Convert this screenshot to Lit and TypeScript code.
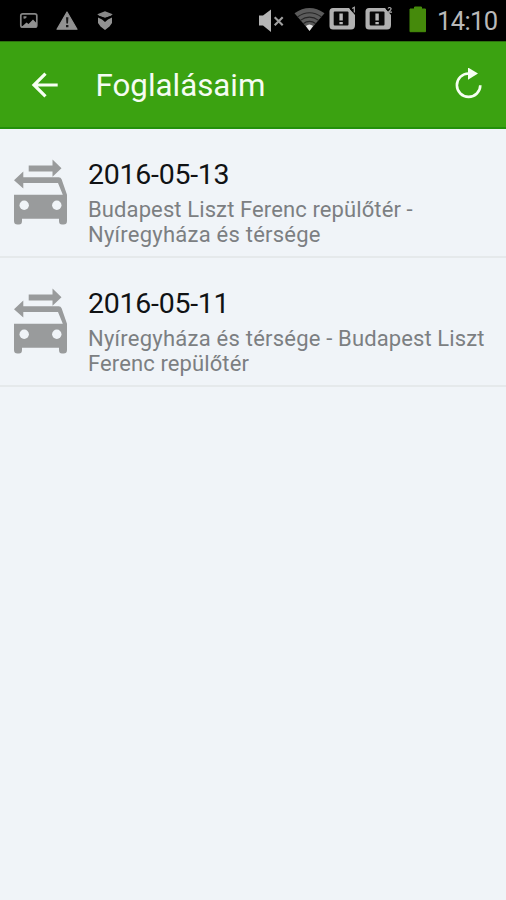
import { LitElement, html, css, svg } from "lit";
import { customElement, property } from "lit/decorators.js";

interface Segment {
  text: string;
  kind: "airport" | "region";
}

interface Booking {
  date: string;
  lines: Segment[][];
}

const bookings: Booking[] = [
  {
    date: "2016-05-13",
    lines: [
      [{ text: "Budapest Liszt Ferenc repülőtér -", kind: "airport" }],
      [{ text: "Nyíregyháza és térsége", kind: "region" }],
    ],
  },
  {
    date: "2016-05-11",
    lines: [
      [
        { text: "Nyíregyháza és térsége", kind: "region" },
        { text: " - Budapest Liszt", kind: "airport" },
      ],
      [{ text: "Ferenc repülőtér", kind: "airport" }],
    ],
  },
];

@customElement("status-bar")
class StatusBar extends LitElement {
  static styles = css`
    :host {
      display: flex;
      justify-content: space-between;
      height: 41px;
      box-sizing: border-box;
      padding: 0 9px 0 19px;
      background: #000;
      font-family: Roboto, "Noto Sans", sans-serif;
      color: #b9b9b9;
    }
    svg { display: block; }
    .left, .right { display: flex; align-items: flex-start; }
    .left { gap: 18px; padding-top: 10px; }
    .right { padding-top: 6px; }
    .mute { margin-right: 9px; }
    .wifi { margin-right: 4px; }
    .sim { margin-right: 8px; overflow: visible; }
    .battery { margin: 0 10px 0 8px; }
    .clock { width: 60px; font-size: 25.5px; line-height: 30px; white-space: nowrap; letter-spacing: -0.6px; }
  `;

  private sim(n: number) {
    const digit = n === 1
      ? svg`<path d="M23.2 2.6 25.3 1.3V6.5" fill="none" stroke="#aaa" stroke-width="1.2"/>`
      : svg`<path d="M23 2.5Q24.5.6 26 2.3 26.6 3.5 23.3 6.2H27" fill="none" stroke="#aaa" stroke-width="1.2"/>`;
    return html`<svg class="sim" width="28" height="26" viewBox="0 0 28 26">
      <path d="M4 2H20L26 9V19Q26 23.5 22 23.5H4Q.5 23.5.5 20V5.5Q.5 2 4 2Z" fill="#b0b0b0"/>
      <rect x="4.7" y="5.5" width="14.8" height="14" rx="1" fill="#080808"/>
      <path d="M21.2 0H28V7.2H25L21.2 3.5Z" fill="#000"/>
      <path d="M10.4 7.5H13.8V14.5H10.4ZM10.4 16H13.8V18.3H10.4Z" fill="#b8b8b8"/>${digit}
    </svg>`;
  }

  render() {
    return html`
      <div class="left">
        <svg width="19" height="21" viewBox="0 0 19 21">
          <rect x="1.8" y="3.8" width="16" height="13.4" rx="2" fill="none" stroke="#858585" stroke-width="1.7"/>
          <path d="M3 16.5 7.5 12.5 9.5 14 14 9.5 17.5 13V17H3Z" fill="#929292"/>
          <path d="M4.5 8.5V6.2H7.5V7.5Q6.8 9 4.5 8.5Z" fill="#858585"/>
        </svg>
        <svg width="22" height="21" viewBox="0 0 22 21">
          <path d="M11 2 21 19.2H1Z" fill="#929292" stroke="#929292" stroke-width="1.2" stroke-linejoin="round"/>
          <path d="M10 7.2H12.4L12 13.5H10.4ZM10 15H12.4V17.2H10Z" fill="#181818"/>
        </svg>
        <svg width="18" height="21" viewBox="0 0 18 21">
          <path d="M9 1.3 16.7 4.2 14.5 6 9 7.8 3.5 6 1.3 4.2Z" fill="#888"/>
          <path d="M2 7.5 6 9.5 9 12 12 9.5 16 7.5V13L13.5 16.5 9 20 4.5 16.5 2 13Z" fill="#929292"/>
          <path d="M4 6.8 9 9 14 6.8" fill="none" stroke="#000" stroke-width="1.3"/>
        </svg>
      </div>
      <div class="right">
        <svg class="mute" width="26" height="28" viewBox="0 0 26 28">
          <path d="M0 9.5H4L12 3.5V26L4 19.5H0Z" fill="#b5b5b5"/>
          <path d="M15.7 11.2 23.7 19.2M23.7 11.2 15.7 19.2" stroke="#a0a0a0" stroke-width="2.1"/>
        </svg>
        <svg class="wifi" width="31" height="26" viewBox="0 0 31 26">
          <path d="M.5 7.2Q15.5-3.4 30.5 7.2L15.5 24.8Z" fill="#5b5b5b"/>
          <path d="M3.4 11Q15.5 2.5 27.6 11M6.3 14.4Q15.5 7.8 24.7 14.4M9.1 17.7Q15.5 13 21.9 17.7" fill="none" stroke="#262626" stroke-width="1.1"/>
          <path d="M11.9 20Q15.5 17 19.1 20L15.5 25Z" fill="#e4e4e4"/>
        </svg>
        ${this.sim(1)}${this.sim(2)}
        <svg class="battery" width="18" height="27" viewBox="0 0 18 27">
          <path d="M5.5 1H12.5V3H16.5V25.7H1V3H5.5Z" fill="#458a0b" stroke="#458a0b" stroke-linejoin="round"/>
        </svg>
        <span class="clock">14:10</span>
      </div>`;
  }
}

@customElement("app-header")
class AppHeader extends LitElement {
  static styles = css`
    :host {
      display: flex;
      align-items: center;
      height: 88px;
      box-sizing: border-box;
      padding: 0 23px 0 31px;
      background: #3ba211;
      border-top: 1px solid #2d720f;
      border-bottom: 2px solid #22900a;
      font-family: Roboto, "Noto Sans", sans-serif;
    }
    svg { display: block; }
    .title { margin-left: 36.5px; padding-top: 2px; flex: 1; color: #f5fcf2; font-size: 31.3px; line-height: 40px; font-weight: 400; }
  `;
  render() {
    return html`
      <svg width="28" height="28" viewBox="0 0 28 28">
        <path d="M26.7 14H3M14.5 2.7 3 14 14.5 25.3" fill="none" stroke="#f6fff2" stroke-width="3.2"/>
      </svg>
      <span class="title">Foglalásaim</span>
      <svg width="28" height="34" viewBox="0 0 28 34">
        <path d="M25.3 17.2A11.7 11.7 0 1 1 13.6 5.5H16" fill="none" stroke="#f6fff2" stroke-width="2.6"/>
        <path d="M13 -.5 23 5.6 13 11.8Z" fill="#f6fff2"/>
      </svg>`;
  }
}

@customElement("booking-row")
class BookingRow extends LitElement {
  @property({ attribute: false }) booking!: Booking;
  static styles = css`
    :host {
      display: flex;
      height: 129px;
      box-sizing: border-box;
      border-bottom: 2px solid #e5e9eb;
      font-family: Roboto, "Noto Sans", sans-serif;
    }
    .car { display: block; flex: none; margin: 30px 20px 0 13px; }
    .text { padding-top: 25.5px; }
    .date { font-size: 28.5px; line-height: 40px; letter-spacing: -0.25px; color: #101214; }
    .route { margin-top: 2px; font-size: 22px; line-height: 25.2px; color: #7c7f82; }
    .line { white-space: pre; }
    .airport { letter-spacing: 0.11px; }
    .region { letter-spacing: 0.24px; }
  `;
  render() {
    return html`
      <svg class="car" width="55" height="68" viewBox="0 0 55 68">
        <g fill="#999b9c">
          <path d="M15.7 6.4H39.5V.6L48.5 9.3 39.5 17.8V12.4H15.7Z"/>
          <path d="M1 21.2 10.3 12.5V18.3H45.7Q47.8 18.3 48.6 20.3L54 35.7V62Q54 65.5 50.5 65.5H49Q46 65.5 46 62V59.8H9V62Q9 65.5 6 65.5H4.5Q1 65.5 1 62V35.7H49.8L45 24H10.3V29.6Z"/>
        </g>
        <circle cx="11.2" cy="46.2" r="4.7" fill="#f0f4f8"/>
        <circle cx="43.8" cy="46.2" r="4.7" fill="#f0f4f8"/>
      </svg>
      <div class="text">
        <div class="date">${this.booking.date}</div>
        <div class="route">${this.booking.lines.map(
          (line) => html`<div class="line">${line.map((s) => html`<span class=${s.kind}>${s.text}</span>`)}</div>`
        )}</div>
      </div>`;
  }
}

@customElement("app-root")
class AppRoot extends LitElement {
  static styles = css`
    :host { display: flex; flex-direction: column; width: 506px; height: 900px; background: #f0f4f8; overflow: hidden; }
  `;
  render() {
    return html`
      <status-bar></status-bar>
      <app-header></app-header>
      ${bookings.map((b) => html`<booking-row .booking=${b}></booking-row>`)}`;
  }
}
